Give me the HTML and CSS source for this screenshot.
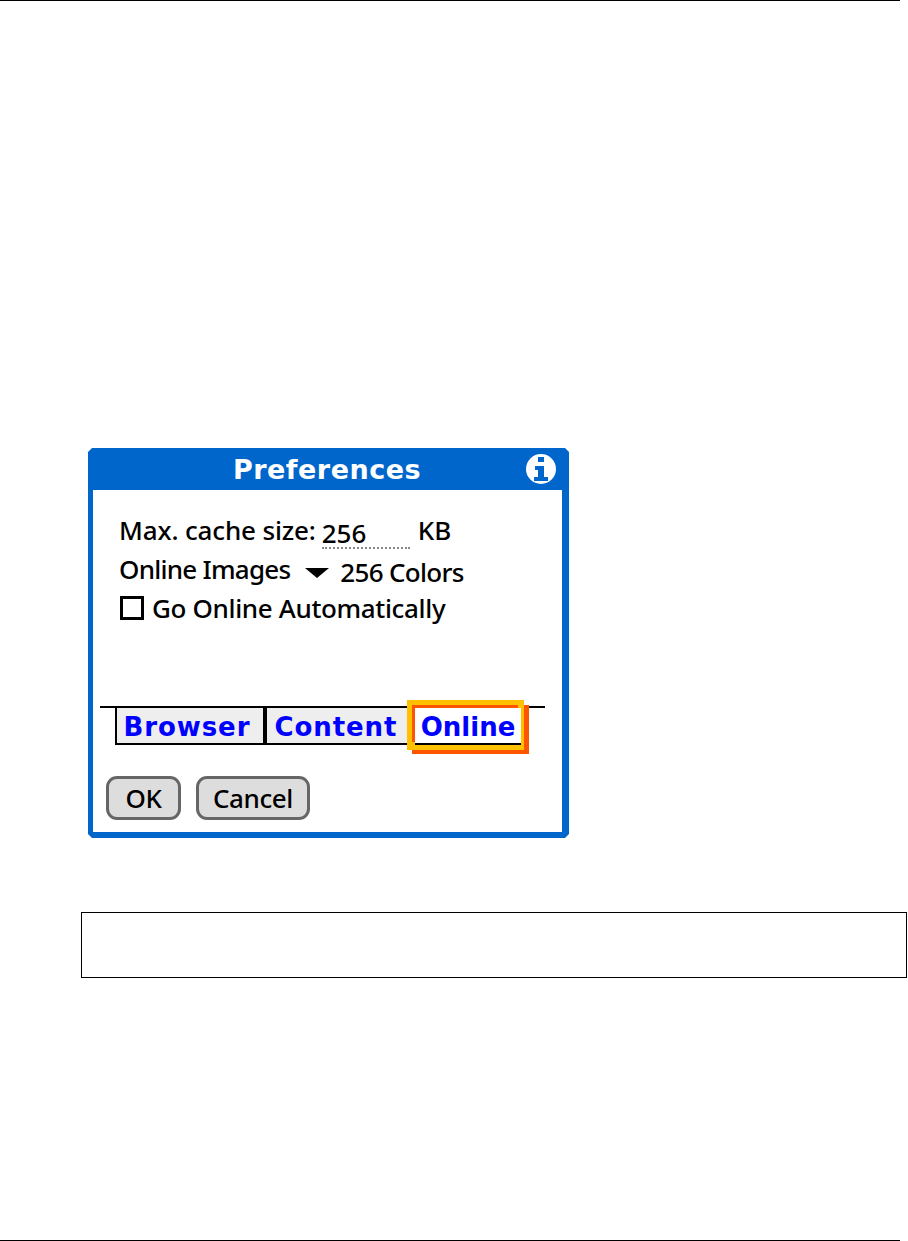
FILE: index.html
```html
<!DOCTYPE html>
<html lang="en">
<head>
  <meta charset="UTF-8" />
  <meta name="viewport" content="width=device-width, initial-scale=1" />
  <title>Preferences</title>
  <link rel="stylesheet" href="styles.css">
</head>
<body>
  <div class="rule"></div>

  <div class="dialog">
    <div class="titlebar">
      <span class="title">Preferences</span>
      <svg class="info" width="30" height="30" viewBox="0 0 30 30">
        <circle cx="15" cy="15" r="15" fill="#fff"/>
        <rect x="12" y="3" width="6" height="5" fill="#0066cc"/>
        <path d="M9 12h9v11h4v4H8v-4h4v-7H9z" fill="#0066cc"/>
      </svg>
    </div>
    <div class="content">
      <div class="row row-cache">
        <span class="label">Max. cache size:</span>
        <span class="field">256</span>
        <span class="unit">KB</span>
      </div>
      <div class="row row-images">
        <span class="label">Online Images</span>
        <span class="arrow"></span>
        <span class="value">256 Colors</span>
      </div>
      <div class="row row-check">
        <span class="checkbox"></span>
        <span class="label">Go Online Automatically</span>
      </div>
      <div class="tabs">
        <div class="tab tab-browser">Browser</div>
        <div class="tab tab-content">Content</div>
        <div class="tab tab-online">Online</div>
      </div>
      <div class="buttons">
        <div class="btn btn-ok">OK</div>
        <div class="btn btn-cancel">Cancel</div>
      </div>
    </div>
  </div>

  <div class="note"></div>

  <div class="rule rule-bottom"></div>
</body>
</html>
```

FILE: styles.css
```css
html, body {
  height: 100%;
}

body {
  margin: 0;
  background: #fff;
  color: #000;
  font-family: "Noto Sans", sans-serif;
  display: flex;
  flex-direction: column;
  overflow: hidden;
}

.rule {
  height: 1px;
  margin-right: 8px;
  background: #000;
  flex: none;
}

.rule-bottom {
  margin-top: auto;
}

.dialog {
  width: 481px;
  height: 390px;
  margin: 447px 0 0 88px;
  background: #0066cc;
  display: flex;
  flex-direction: column;
  flex: none;
  clip-path: polygon(4px 0, 477px 0, 481px 4px, 481px 386px, 477px 390px, 4px 390px, 0 386px, 0 4px);
}

.titlebar {
  height: 42px;
  display: flex;
  align-items: center;
  justify-content: center;
  position: relative;
  flex: none;
}

.title {
  color: #fff;
  font-family: "DejaVu Sans", sans-serif;
  font-weight: bold;
  font-size: 27px;
  letter-spacing: 0.5px;
  margin-right: 3px;
  padding-top: 1px;
}

.info {
  position: absolute;
  right: 13px;
  top: 6px;
}

.content {
  flex: 1;
  margin: 0 7px 6px 5px;
  background: #fff;
  padding-top: 20px;
  display: flex;
  flex-direction: column;
  font-size: 26px;
  font-weight: 500;
}

.row {
  display: flex;
  align-items: center;
  margin-left: 26px;
  height: 39px;
  flex: none;
  white-space: nowrap;
}

.row-cache .label {
  letter-spacing: -0.15px;
}

.row-images .label {
  letter-spacing: -0.75px;
}

.row-check .label {
  letter-spacing: -0.35px;
}

.field {
  width: 88px;
  margin-left: 6px;
  margin-top: 9px;
  border-bottom: 2px dotted #888;
  line-height: 27px;
  height: 27px;
}

.unit {
  margin-left: 8px;
}

.arrow {
  width: 0;
  height: 0;
  margin: 8px 11px 0 15px;
  border-left: 12px solid transparent;
  border-right: 12px solid transparent;
  border-top: 10px solid #000;
}

.value {
  padding-top: 7px;
  letter-spacing: -0.7px;
}

.checkbox {
  width: 18px;
  height: 18px;
  border: 3px solid #000;
  margin: 0 8px 0 1px;
}

.tabs {
  display: flex;
  isolation: isolate;
  margin: 79px 17px 0 7px;
  padding-left: 15px;
  border-top: 2px solid #000;
  flex: none;
  font-family: "DejaVu Sans", sans-serif;
  font-weight: bold;
  font-size: 26px;
  color: #0000ff;
}

.tab {
  height: 35px;
  line-height: 39px;
  text-align: center;
  background: #eee;
  border-bottom: 2px solid #000;
}

.tab-browser {
  box-sizing: border-box;
  width: 148px;
  border-left: 2px solid #000;
  letter-spacing: 0.9px;
  padding-right: 6px;
  height: 37px;
}

.tab-content {
  box-sizing: border-box;
  width: 144px;
  border-left: 4px solid #000;
  letter-spacing: 0.9px;
  padding-right: 2px;
  height: 37px;
}

/* focus ring sits under the selected tab, yellow over orange */
.tab-online {
  width: 106px;
  margin-left: 8px;
  background: #fff;
  position: relative;
  box-shadow: -3px -3px 0 0 #ff5500;
}

.tab-online::before,
.tab-online::after {
  content: "";
  position: absolute;
}

.tab-online::before {
  inset: -3px -8px -11px -3px;
  background: #ff5500;
  z-index: -2;
}

.tab-online::after {
  inset: -8px -3px -7px -8px;
  background: #ffc000;
  z-index: -1;
}

.buttons {
  display: flex;
  gap: 15px;
  margin: 31px 0 0 13px;
}

.btn {
  height: 38px;
  line-height: 38px;
  text-align: center;
  background: #ddd;
  border: 3px solid #666;
  border-radius: 11px;
  letter-spacing: -0.4px;
}

.btn-ok {
  width: 69px;
}

.btn-cancel {
  width: 108px;
}

.note {
  height: 64px;
  margin: 74px 1px 0 81px;
  border: 1px solid #000;
  flex: none;
}
```
